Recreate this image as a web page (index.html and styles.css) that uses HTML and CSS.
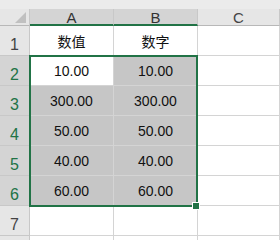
FILE: index.html
```html
<!DOCTYPE html>
<html lang="zh">

<head>
  <meta charset="UTF-8">
  <meta name="viewport" content="width=device-width, initial-scale=1.0">
  <title>Sheet</title>
  <link rel="stylesheet" href="styles.css">
</head>

<body>
  <div class="sheet">
    <div class="band"></div>
    <div class="grid">
      <!-- header row -->
      <div class="corner"><span class="tri"></span></div>
      <div class="col-head on">A</div>
      <div class="col-head on">B</div>
      <div class="col-head">C</div>
      <div class="col-head blank"></div>

      <div class="row-head">1</div>
      <div class="cell">数值</div>
      <div class="cell">数字</div>
      <div class="cell"></div>
      <div class="cell blank"></div>

      <div class="row-head on">2</div>
      <div class="cell active">10.00</div>
      <div class="cell sel">10.00</div>
      <div class="cell"></div>
      <div class="cell blank"></div>

      <div class="row-head on">3</div>
      <div class="cell sel">300.00</div>
      <div class="cell sel">300.00</div>
      <div class="cell"></div>
      <div class="cell blank"></div>

      <div class="row-head on">4</div>
      <div class="cell sel">50.00</div>
      <div class="cell sel">50.00</div>
      <div class="cell"></div>
      <div class="cell blank"></div>

      <div class="row-head on">5</div>
      <div class="cell sel">40.00</div>
      <div class="cell sel">40.00</div>
      <div class="cell"></div>
      <div class="cell blank"></div>

      <div class="row-head on">6</div>
      <div class="cell sel">60.00</div>
      <div class="cell sel">60.00</div>
      <div class="cell"></div>
      <div class="cell blank"></div>

      <div class="row-head">7</div>
      <div class="cell"></div>
      <div class="cell"></div>
      <div class="cell"></div>
      <div class="cell blank"></div>

      <div class="row-head"></div>
      <div class="cell"></div>
      <div class="cell"></div>
      <div class="cell"></div>
      <div class="cell blank"></div>
    </div>

    <!-- selection frame over A2:B6 -->
    <div class="selection"></div>
    <div class="handle"></div>
  </div>
</body>

</html>
```

FILE: styles.css
```css
body {
  margin: 0;
  background: #fff;
  font: 14px "Liberation Sans", "Noto Sans CJK SC", sans-serif;
  color: #222;
}

.sheet {
  position: relative;
  width: 280px;
  height: 240px;
  overflow: hidden;
}

.band {
  height: 9px;
  background: #ebebeb;
}

.grid {
  display: grid;
  grid-template-columns: 30px 84px 84px 82px 20px;
  grid-template-rows: 17px repeat(8, 30px);
}

.grid > div {
  box-sizing: border-box;
}

.corner {
  position: relative;
  background: #e6e6e6;
  border-right: 1px solid #c8c8c8;
  border-bottom: 1px solid #b8b8b8;
}

.tri {
  position: absolute;
  right: 3px;
  bottom: 2px;
  width: 0;
  height: 0;
  border-left: 11px solid transparent;
  border-bottom: 11px solid #c0c0c0;
}

.col-head {
  display: flex;
  align-items: center;
  justify-content: center;
  padding-top: 1px;
  background: #e6e6e6;
  border-right: 1px solid #c8c8c8;
  border-bottom: 1px solid #b8b8b8;
  font-size: 15px;
  line-height: 1;
  color: #444;
}

.col-head.on {
  background: #d4d4d4;
  border-bottom: 2px solid #217346;
  color: #333;
}

.col-head.blank {
  border-right: none;
}

.row-head {
  display: flex;
  align-items: flex-end;
  justify-content: center;
  padding-bottom: 2px;
  background: #e6e6e6;
  border-right: 1px solid #c8c8c8;
  border-bottom: 1px solid #c8c8c8;
  font-size: 16px;
  line-height: 1;
  color: #444;
}

.row-head.on {
  background: #d4d4d4;
  color: #217346;
}

.cell {
  display: flex;
  align-items: center;
  justify-content: center;
  padding-top: 1px;
  border-right: 1px solid #d4d4d4;
  border-bottom: 1px solid #d4d4d4;
  font-size: 14px;
  color: #111;
}

.cell.sel {
  background: #c6c6c6;
}

.cell.active {
  background: #fff;
}

.cell.blank {
  border-right: none;
}

.selection {
  position: absolute;
  left: 29px;
  top: 55px;
  width: 169px;
  height: 152px;
  box-sizing: border-box;
  border: 2px solid #217346;
}

.handle {
  position: absolute;
  left: 193px;
  top: 203px;
  width: 6px;
  height: 6px;
  background: #217346;
  box-shadow: 0 0 0 1px #fff;
}
```
